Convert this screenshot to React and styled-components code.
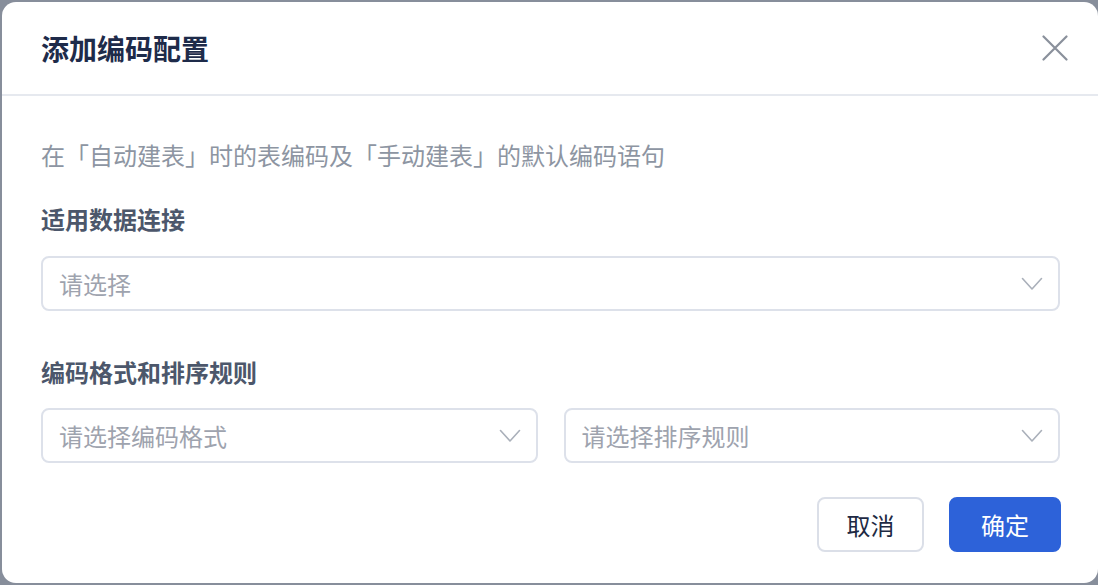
import React from "react";
import styled, { createGlobalStyle } from "styled-components";

const Global = createGlobalStyle`
  html, body { margin: 0; padding: 0; }
  body {
    background: #878e9b;
    font-family: "Noto Sans CJK SC", "Noto Sans", sans-serif;
    width: 1098px;
    height: 585px;
    overflow: hidden;
  }
`;

const Modal = styled.div`
  box-sizing: border-box;
  margin: 2px 0 0 2px;
  width: 1096px;
  height: 581px;
  background: #fff;
  border-radius: 14px;
  display: flex;
  flex-direction: column;
`;

const Header = styled.div`
  box-sizing: border-box;
  height: 94px;
  padding: 0 30px 0 39px;
  display: flex;
  align-items: center;
  justify-content: space-between;
  border-bottom: 2px solid #e6e9ef;
`;

const Title = styled.h2`
  margin: 0;
  font-size: 28px;
  line-height: 36px;
  font-weight: 700;
  color: #1e2b4a;
`;

const Close = styled.button`
  border: 0;
  background: none;
  padding: 0;
  width: 26px;
  height: 26px;
  display: flex;
  align-items: center;
  justify-content: center;
  cursor: pointer;
`;

const Body = styled.div`
  padding: 43px 38px 0 39px;
  display: flex;
  flex-direction: column;
`;

const Desc = styled.p`
  margin: 0;
  font-size: 24px;
  line-height: 32px;
  color: #8d95a2;
`;

const Label = styled.div`
  margin-top: ${(p) => p.$gap}px;
  font-size: 24px;
  line-height: 32px;
  font-weight: 700;
  color: #4c576b;
`;

const Row = styled.div`
  margin-top: ${(p) => p.$gap}px;
  display: flex;
  gap: 26px;
`;

const SelectBox = styled.div`
  box-sizing: border-box;
  flex: 1;
  height: 55px;
  border: 2px solid #dde1ea;
  border-radius: 8px;
  padding: 0 15px 0 16px;
  display: flex;
  align-items: center;
  justify-content: space-between;
  background: #fff;
`;

const Placeholder = styled.span`
  font-size: 24px;
  line-height: 32px;
  color: #9ea3ae;
`;

const Footer = styled.div`
  margin-top: 34px;
  padding: 0 37px 0 0;
  display: flex;
  justify-content: flex-end;
  gap: 25px;
`;

const Button = styled.button`
  box-sizing: border-box;
  height: 55px;
  width: ${(p) => (p.$primary ? 112 : 107)}px;
  border-radius: 8px;
  border: 2px solid ${(p) => (p.$primary ? "#2d62d9" : "#dbdfe8")};
  background: ${(p) => (p.$primary ? "#2d62d9" : "#fff")};
  color: ${(p) => (p.$primary ? "#fff" : "#1e2a44")};
  font-family: "Noto Sans CJK SC", "Noto Sans", sans-serif;
  font-size: 24px;
  line-height: 32px;
  padding: 0;
  cursor: pointer;
`;

const Chevron = () => (
  <svg width="22" height="14" viewBox="0 0 22 14" fill="none">
    <path d="M1.5 1.5 L11 12 L20.5 1.5" stroke="#aab0ba" strokeWidth="1.6" strokeLinecap="round" strokeLinejoin="round" />
  </svg>
);

const Select = ({ placeholder }) => (
  <SelectBox>
    <Placeholder>{placeholder}</Placeholder>
    <Chevron />
  </SelectBox>
);

export default function App() {
  return (
    <>
      <Global />
      <Modal>
        <Header>
          <Title>添加编码配置</Title>
          <Close aria-label="close">
            <svg width="26" height="26" viewBox="0 0 26 26" fill="none">
              <path d="M1.5 1.5 L24.5 24.5 M24.5 1.5 L1.5 24.5" stroke="#8a909b" strokeWidth="2.2" strokeLinecap="round" />
            </svg>
          </Close>
        </Header>
        <Body>
          <Desc>在「自动建表」时的表编码及「手动建表」的默认编码语句</Desc>
          <Label $gap={32}>适用数据连接</Label>
          <Row $gap={21}>
            <Select placeholder="请选择" />
          </Row>
          <Label $gap={45}>编码格式和排序规则</Label>
          <Row $gap={20}>
            <Select placeholder="请选择编码格式" />
            <Select placeholder="请选择排序规则" />
          </Row>
        </Body>
        <Footer>
          <Button>取消</Button>
          <Button $primary>确定</Button>
        </Footer>
      </Modal>
    </>
  );
}
